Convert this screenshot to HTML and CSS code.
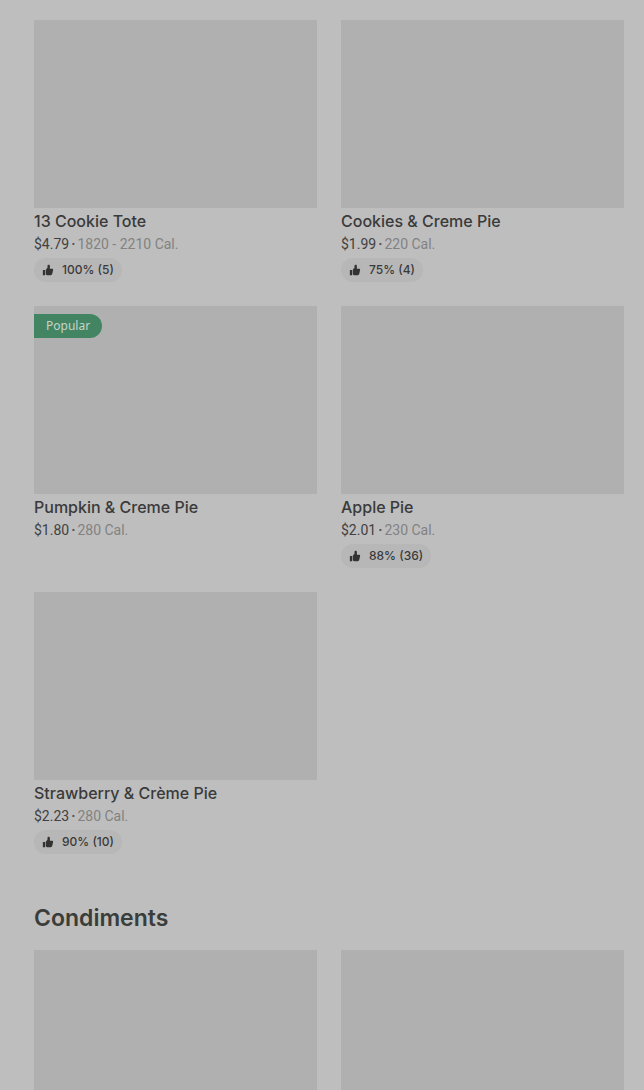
FILE: index.html
```html
<!DOCTYPE html>
<html lang="en">
<head>
<meta charset="utf-8">
<meta name="viewport" content="width=device-width, initial-scale=1">
<title>Menu</title>
<link rel="stylesheet" href="styles.css">
</head>
<body>
<svg class="symbols" aria-hidden="true">
  <symbol id="thumb" viewBox="-1 -1 14 14">
    <path d="M0 6h2.600v6H0zM3.400 5.600 5.400 3.400V1.200C5.400.4 5.800 0 6.400 0h.4c.8 0 1.400.6 1.400 1.400V4.600H11c.7 0 1 .5 1 1.100L11 10.500Q10.600 12 9.200 12H5L3.400 11.200z"/>
  </symbol>
</svg>
<main class="menu">
  <section class="grid">
    <article class="card">
      <div class="photo"></div>
      <h3 class="name">13 Cookie Tote</h3>
      <p class="info"><span class="price">$4.79</span><span class="dot">·</span><span>1820 - 2210 Cal.</span></p>
      <p class="rating"><svg class="thumb" aria-hidden="true"><use href="#thumb"/></svg>100% (5)</p>
    </article>
    <article class="card">
      <div class="photo"></div>
      <h3 class="name">Cookies &amp; Creme Pie</h3>
      <p class="info"><span class="price">$1.99</span><span class="dot">·</span><span>220 Cal.</span></p>
      <p class="rating"><svg class="thumb" aria-hidden="true"><use href="#thumb"/></svg>75% (4)</p>
    </article>
    <article class="card">
      <div class="photo"><span class="tag">Popular</span></div>
      <h3 class="name">Pumpkin &amp; Creme Pie</h3>
      <p class="info"><span class="price">$1.80</span><span class="dot">·</span><span>280 Cal.</span></p>
    </article>
    <article class="card">
      <div class="photo"></div>
      <h3 class="name">Apple Pie</h3>
      <p class="info"><span class="price">$2.01</span><span class="dot">·</span><span>230 Cal.</span></p>
      <p class="rating"><svg class="thumb" aria-hidden="true"><use href="#thumb"/></svg>88% (36)</p>
    </article>
    <article class="card">
      <div class="photo"></div>
      <h3 class="name">Strawberry &amp; Crème Pie</h3>
      <p class="info"><span class="price">$2.23</span><span class="dot">·</span><span>280 Cal.</span></p>
      <p class="rating"><svg class="thumb" aria-hidden="true"><use href="#thumb"/></svg>90% (10)</p>
    </article>
  </section>
  <h2 class="heading">Condiments</h2>
  <section class="grid">
    <article class="card"><div class="photo"></div></article>
    <article class="card"><div class="photo"></div></article>
  </section>
</main>
</body>
</html>
```

FILE: styles.css
```css
* { box-sizing: border-box; }

body {
  margin: 0;
  height: 100vh;
  overflow: hidden;
  background: #bebebe;
  color: #3a3a3a;
  font-family: Inter, "Liberation Sans", sans-serif;
}

.symbols { display: none; }

.menu { padding: 20px 20px 0 34px; }

.grid {
  display: grid;
  grid-template-columns: 1fr 1fr;
  gap: 24px;
}

.photo {
  height: 188px;
  padding-top: 8px;
  background: #b0b0b0;
}

.tag {
  display: inline-block;
  padding: 0 12px;
  border-radius: 0 12px 12px 0;
  background: #438563;
  color: #c4d4cb;
  font-family: "Noto Sans", sans-serif;
  font-size: 12px;
  line-height: 24px;
  vertical-align: top;
}

.name {
  margin: 1px 0;
  font-size: 16px;
  font-weight: 500;
  line-height: 24px;
}

.info {
  display: flex;
  gap: 2px;
  margin: 0;
  color: #828282;
  font-family: Roboto, sans-serif;
  font-size: 14px;
  line-height: 20px;
}

.price { color: #414141; }

.dot {
  color: #555;
  font-weight: 700;
}

.rating {
  display: flex;
  align-items: center;
  gap: 8px;
  width: fit-content;
  margin: 4px 0 0;
  padding: 0 8px;
  border-radius: 12px;
  background: #b7b7b7;
  font-size: 12px;
  font-weight: 500;
  line-height: 24px;
}

.thumb {
  width: 12px;
  height: 12px;
  fill: #333;
}

.heading {
  margin: 48px 0 16px;
  color: #3a3d3a;
  font-size: 23px;
  font-weight: 600;
  line-height: 32px;
}
```
